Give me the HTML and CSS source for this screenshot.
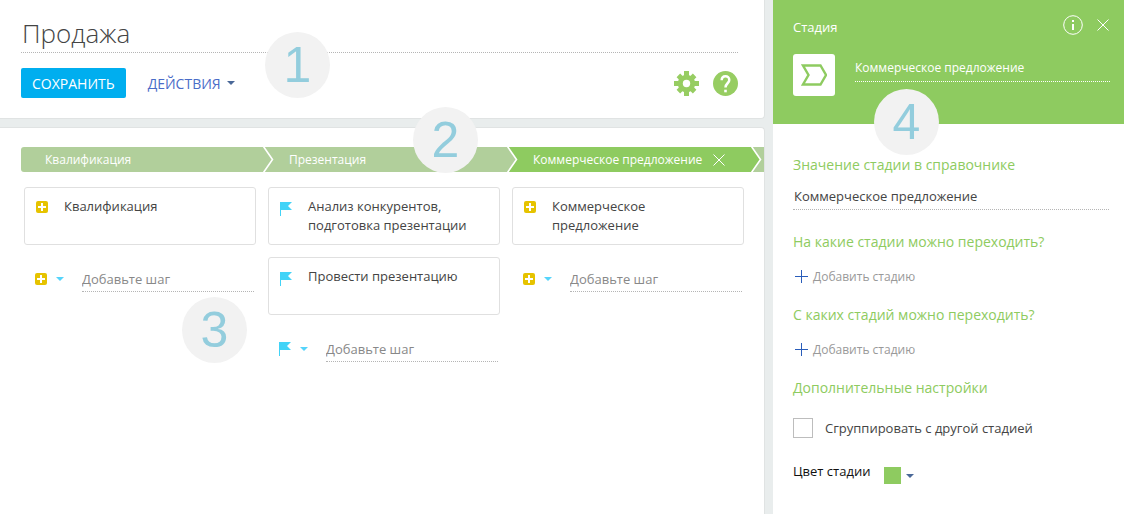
FILE: index.html
```html
<!DOCTYPE html>
<html lang="ru">
<head>
<meta charset="utf-8">
<title>Продажа</title>
<link rel="stylesheet" href="styles.css">
</head>
<body>
<svg class="sprite" aria-hidden="true">
  <symbol id="plus-box" viewBox="0 0 12 12"><rect width="12" height="12" rx="2" fill="#e6c300"/><path d="M6 2v8M2 6h8" stroke="#fff" stroke-width="2"/></symbol>
  <symbol id="flag" viewBox="0 0 12 14"><path d="M0 0H12L8 4L12 8H1V14H0Z" fill="#42d3f7"/></symbol>
  <symbol id="caret" viewBox="0 0 8 4"><path d="M0 0H8L4 4Z" fill="currentColor"/></symbol>
  <symbol id="cross" viewBox="0 0 12 12"><path d="M.5 .5L11.5 11.5M11.5 .5L.5 11.5" stroke="currentColor" fill="none"/></symbol>
  <symbol id="plus" viewBox="0 0 13 13"><path d="M6.5 0V13M0 6.5H13" stroke="#2a5dba" fill="none"/></symbol>
  <symbol id="arrow" viewBox="0 0 11 25"><path d="M0 0H1L9.500 12.500L1 25H0Z" fill="currentColor"/><path d="M.5 -.5L9.500 12.500L.5 25.500" fill="none" stroke="#fff" stroke-width="1.600"/></symbol>
</svg>

<div class="page">
  <main class="workspace">
    <header class="panel toolbar">
      <input class="title" type="text" value="Продажа" aria-label="Название процесса">
      <div class="actions">
        <button class="save" type="button">СОХРАНИТЬ</button>
        <button class="menu" type="button">ДЕЙСТВИЯ <svg class="caret"><use href="#caret"/></svg></button>
        <div class="tools">
          <button class="icon-button" type="button" aria-label="Настройки">
            <svg width="25" height="25" viewBox="0 0 25 25"><g fill="#97cd62"><circle cx="12.500" cy="12.500" r="8.700"/><path d="M10 0H15V25H10ZM0 10H25V15H0Z"/><path d="M10 1H15V24H10ZM1 10H24V15H1Z" transform="rotate(45 12.500 12.500)"/></g><circle cx="12.500" cy="12.500" r="3.700" fill="#fff"/></svg>
          </button>
          <button class="icon-button" type="button" aria-label="Справка">
            <svg width="25" height="25" viewBox="0 0 25 25"><circle cx="12.500" cy="12.500" r="12.500" fill="#97cd62"/><path d="M8.700 9.300C8.700 3.900 16.300 3.900 16.300 9C16.300 12.300 12.500 12.300 12.500 16.500" fill="none" stroke="#fff" stroke-width="2.500"/><path d="M11.200 18.700h2.600v2.600h-2.600z" fill="#fff"/></svg>
          </button>
        </div>
      </div>
    </header>

    <section class="panel board">
      <div class="stages">
        <div class="stage stage-first">Квалификация</div>
        <div class="stage"><svg class="arrow"><use href="#arrow"/></svg>Презентация</div>
        <div class="stage stage-active"><svg class="arrow"><use href="#arrow"/></svg>Коммерческое предложение
          <button class="icon-button" type="button" aria-label="Удалить стадию"><svg class="cross"><use href="#cross"/></svg></button></div>
        <div class="stage stage-rest"><svg class="arrow arrow-active"><use href="#arrow"/></svg></div>
      </div>
      <div class="columns">
        <div class="column">
          <article class="card"><svg class="step-icon"><use href="#plus-box"/></svg><p>Квалификация</p></article>
          <div class="add-step">
            <button class="step-type" type="button" aria-label="Тип шага"><svg class="step-icon"><use href="#plus-box"/></svg><svg class="caret"><use href="#caret"/></svg></button>
            <input class="step-name" type="text" placeholder="Добавьте шаг" aria-label="Добавьте шаг">
          </div>
        </div>
        <div class="column">
          <article class="card"><svg class="step-icon flag"><use href="#flag"/></svg><p>Анализ конкурентов, подготовка презентации</p></article>
          <article class="card"><svg class="step-icon flag"><use href="#flag"/></svg><p>Провести презентацию</p></article>
          <div class="add-step">
            <button class="step-type" type="button" aria-label="Тип шага"><svg class="step-icon flag"><use href="#flag"/></svg><svg class="caret"><use href="#caret"/></svg></button>
            <input class="step-name" type="text" placeholder="Добавьте шаг" aria-label="Добавьте шаг">
          </div>
        </div>
        <div class="column">
          <article class="card"><svg class="step-icon"><use href="#plus-box"/></svg><p>Коммерческое предложение</p></article>
          <div class="add-step">
            <button class="step-type" type="button" aria-label="Тип шага"><svg class="step-icon"><use href="#plus-box"/></svg><svg class="caret"><use href="#caret"/></svg></button>
            <input class="step-name" type="text" placeholder="Добавьте шаг" aria-label="Добавьте шаг">
          </div>
        </div>
      </div>
    </section>
  </main>

  <aside class="details">
    <header class="details-head">
      <div class="details-top">
        <span class="details-kind">Стадия</span>
        <div class="details-tools">
          <button class="icon-button" type="button" aria-label="Информация"><svg width="20" height="20" viewBox="0 0 20 20"><circle cx="10" cy="10" r="9.300" fill="none" stroke="#fff"/><path d="M9 5h2v2h-2zM9 9h2v6h-2z" fill="#fff"/></svg></button>
          <button class="icon-button" type="button" aria-label="Закрыть"><svg class="cross"><use href="#cross"/></svg></button>
        </div>
      </div>
      <div class="details-title">
        <span class="tile"><svg width="26" height="22" viewBox="0 0 26 22"><path d="M2 1.500H19.500L25 11L19.500 20.500H2L7.500 11Z" fill="none" stroke="#8ecb60" stroke-width="2.400"/></svg></span>
        <input class="details-name" type="text" value="Коммерческое предложение" aria-label="Название стадии">
      </div>
    </header>
    <div class="details-body">
      <h2><label for="value">Значение стадии в справочнике</label></h2>
      <input class="field" id="value" type="text" value="Коммерческое предложение">
      <h2>На какие стадии можно переходить?</h2>
      <button class="add-stage" type="button"><svg class="plus"><use href="#plus"/></svg>Добавить стадию</button>
      <h2>С каких стадий можно переходить?</h2>
      <button class="add-stage" type="button"><svg class="plus"><use href="#plus"/></svg>Добавить стадию</button>
      <h2>Дополнительные настройки</h2>
      <label class="check"><input type="checkbox"><span>Сгруппировать с другой стадией</span></label>
      <div class="color-row">
        <span id="color-label">Цвет стадии</span>
        <button class="color" type="button" aria-labelledby="color-label"><span class="swatch"></span><svg class="caret"><use href="#caret"/></svg></button>
      </div>
    </div>
  </aside>

  <span class="badge badge-one">1</span>
  <span class="badge badge-two">2</span>
  <span class="badge badge-three">3</span>
  <span class="badge badge-four">4</span>
</div>
</body>
</html>
```
FILE: styles.css
```css
* { box-sizing: border-box; }

body {
  margin: 0;
  background: #e9eded;
  color: #444;
  font: 13px/19px "Open Sans", "Noto Sans", sans-serif;
}

button, input { font: inherit; color: inherit; }
button { padding: 0; border: 0; background: none; cursor: pointer; }
input[type="text"] {
  display: block;
  min-width: 0;
  padding: 0;
  border: 0;
  border-bottom: 1px dotted #b5b5b5;
  border-radius: 0;
  background: none;
  outline: 0;
}
h2, p { margin: 0; }
svg { display: block; flex: none; }

.sprite { position: absolute; width: 0; height: 0; }
.caret { width: 8px; height: 4px; }
.cross { width: 12px; height: 12px; }
.plus { width: 13px; height: 13px; }
.arrow { width: 11px; height: 25px; color: #b1cf9b; }
.arrow-active { color: #8ecb60; }
.icon-button { display: block; }

.page {
  position: relative;
  display: grid;
  grid-template-columns: minmax(0, 1fr) 351px;
  gap: 8px;
  min-height: 100vh;
  overflow: hidden;
}
.workspace { display: flex; flex-direction: column; gap: 8px; }
.panel {
  border: solid #e0e3e3;
  border-width: 1px 1px 1px 0;
  border-radius: 0 4px 4px 0;
  background: #fff;
}

.toolbar { padding: 14px 26px 20px 21px; border-top: 0; border-top-right-radius: 0; }
input.title { width: 100%; height: 39px; padding-left: 1px; font-size: 26px; font-weight: 300; }
.actions { display: flex; align-items: center; margin-top: 15px; font-size: 14px; }
.save {
  height: 30px;
  padding: 0 11px;
  border-radius: 2px;
  background: #00aeef;
  color: #fff;
}
.menu { display: flex; align-items: center; gap: 6px; margin-left: 22px; color: #4a6cc8; }
.menu .caret { color: #4a6898; }
.tools { display: flex; gap: 14px; margin-left: auto; }

.board { flex: 1; padding: 19px 0 20px 21px; border-bottom: 0; border-bottom-right-radius: 0; overflow: hidden; }
.stages { display: flex; height: 25px; border-radius: 3px 0 0 3px; overflow: hidden; }
.stage {
  display: flex;
  flex: none;
  align-items: center;
  width: 244px;
  background: #b1cf9b;
  color: #fff;
  font-size: 12px;
  white-space: nowrap;
}
.stage .arrow { margin-right: 15px; }
.stage-first { width: 242px; padding-left: 24px; }
.stage-active { background: #8ecb60; }
.stage-active .icon-button { margin-left: 11px; }
.stage-rest { flex: 1; width: auto; }

.columns { display: flex; gap: 12px; padding: 15px 0 0 3px; }
.column { display: flex; flex: none; flex-direction: column; gap: 12px; width: 232px; }
.card {
  display: flex;
  gap: 16px;
  min-height: 58px;
  padding: 9px 24px 9px 11px;
  border: 1px solid #e0e0e0;
  border-radius: 3px;
}
.step-icon { width: 12px; height: 12px; }
.flag { height: 14px; }
.card .step-icon { margin-top: 4px; }
.card .flag { margin-top: 5px; }
.add-step { display: flex; align-items: center; gap: 18px; padding: 9px 2px 0 11px; }
.step-type { display: flex; align-items: center; gap: 9px; color: #55d4fb; }
.step-name { flex: 1; height: 26px; }
.step-name::placeholder { color: #888; opacity: 1; }

.details { background: #fff; }
.details-head { height: 124px; padding: 15px 15px 0 20px; background: #8ecb60; color: #fff; }
.details-top, .details-tools { display: flex; align-items: center; justify-content: space-between; }
.details-kind { padding-top: 4px; }
.details-top { height: 20px; }
.details-tools { gap: 14px; }
.details-title { display: flex; gap: 20px; margin: 19px -1px 0 0; }
.tile {
  display: grid;
  flex: none;
  place-items: center;
  width: 42px;
  height: 42px;
  border-radius: 3px;
  background: #fff;
}
.details-title .details-name { flex: 1; height: 28px; border-color: #fff; font-size: 12px; }
.details-body { padding: 31px 15px 24px 20px; }
h2 { color: #8ecb60; font-size: 14px; font-weight: 400; line-height: 19px; }
.details-body .field { width: 100%; height: 26px; margin: 10px 0 22px; padding: 0 0 1px 1px; }
.add-stage {
  display: flex;
  align-items: center;
  gap: 5px;
  margin: 16px 0 19px;
  padding-left: 2px;
  color: #999;
  font-size: 12px;
}
.check { display: flex; align-items: center; gap: 12px; margin-top: 21px; }
.check input {
  appearance: none;
  width: 20px;
  height: 20px;
  margin: 0;
  border: 1px solid #bdbdbd;
  background: #fff;
}
.color-row { display: flex; align-items: center; gap: 14px; margin-top: 21px; color: #111; }
.color { display: flex; align-items: center; gap: 5px; padding-top: 8px; color: #4a6898; }
.swatch { width: 17px; height: 17px; background: #8ecb60; }

.badge {
  position: absolute;
  width: 65px;
  height: 66px;
  border-radius: 50%;
  background: #f2f2f2;
  color: #93cddd;
  font: 50px/66px "Liberation Sans", Arial, sans-serif;
  text-align: center;
}
.badge-one { left: 265px; top: 32px; }
.badge-two { left: 413px; top: 107px; }
.badge-three { left: 182px; top: 297px; }
.badge-four { left: 874px; top: 89px; }
```
